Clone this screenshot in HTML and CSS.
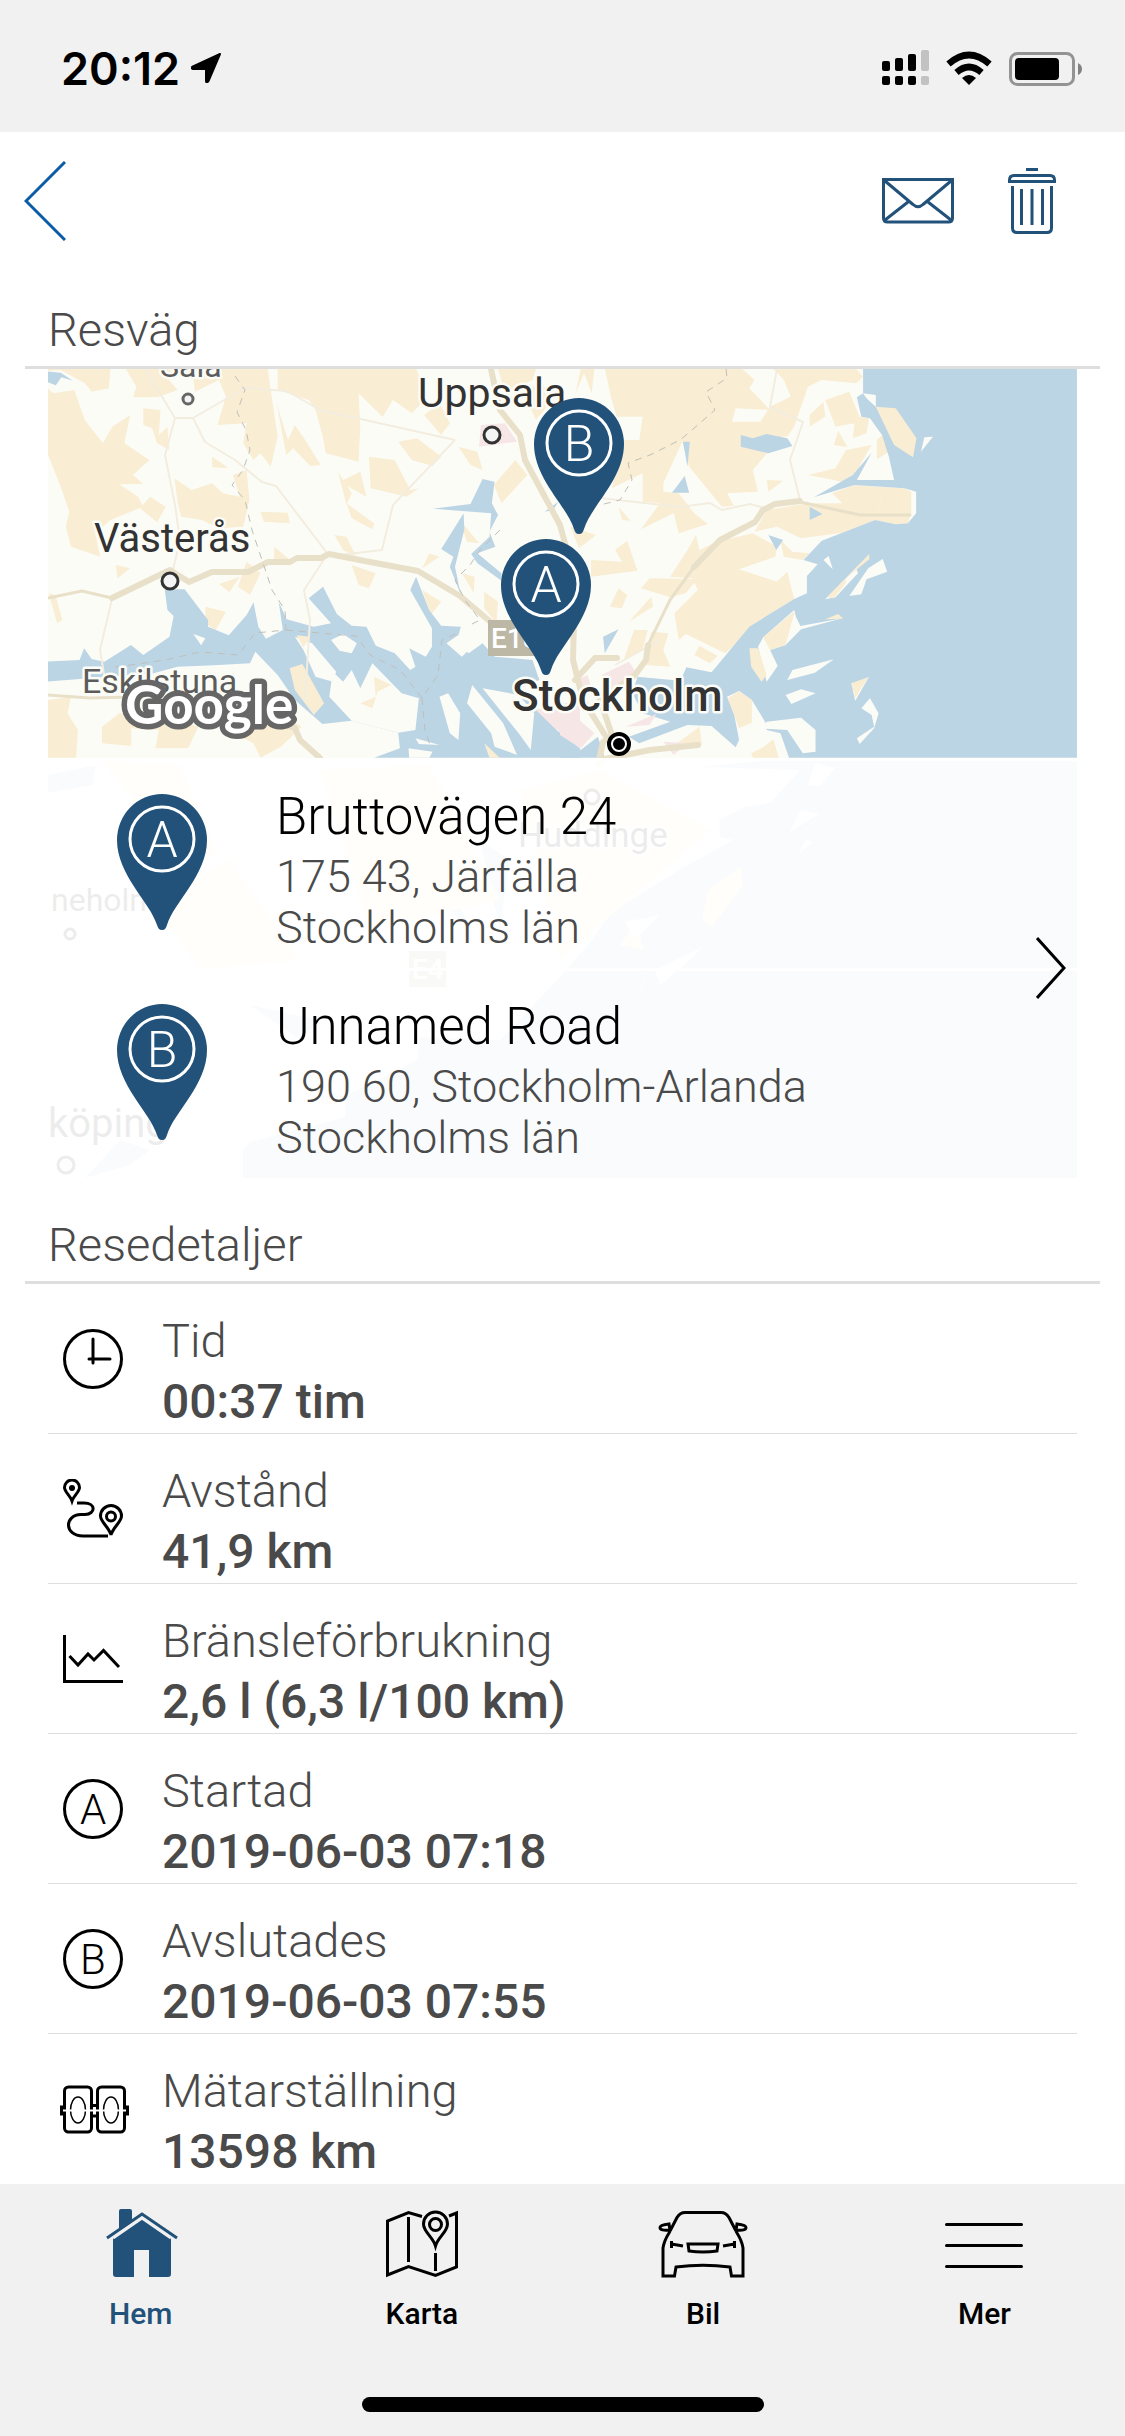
FILE: index.html
```html
<!DOCTYPE html>
<html lang="sv">
<head>
  <meta charset="UTF-8">
  <meta name="viewport" content="width=device-width, initial-scale=1">
  <title>Resedetaljer</title>
  <link rel="stylesheet" href="styles.css">
</head>
<body>
  <!-- shared pin shape -->
  <svg class="defs" width="0" height="0" aria-hidden="true">
    <defs>
      <g id="pin">
        <path d="M45 136c-3 0-4-2-5-5C33 108 0 81 0 46A45 46 0 0 1 90 46C90 81 57 108 50 131c-1 3-2 5-5 5z" fill="#22527a"/>
        <circle cx="45" cy="45" r="32" fill="none" stroke="#fff" stroke-width="3"/>
      </g>
    </defs>
  </svg>

  <div class="status">
    <div class="status-time">
      <span>20:12</span>
      <svg width="30" height="30" viewBox="0 0 30 30"><path d="M29 1 17.500 28Q15.500 31 15 28V16H2Q-1 15 2 13.500z" stroke="#000" stroke-width="2" stroke-linejoin="round"/></svg>
    </div>
    <svg width="200" height="36" viewBox="882 50 200 36">
      <rect x="882" y="61" width="8" height="10" rx="2"/>
      <rect x="895" y="58" width="8" height="13" rx="2"/>
      <rect x="908" y="54" width="8" height="17" rx="2"/>
      <rect x="921" y="50" width="8" height="21" rx="2" fill="#c2c2c2"/>
      <rect x="882" y="76" width="8" height="9" rx="2"/>
      <rect x="895" y="76" width="8" height="9" rx="2"/>
      <rect x="908" y="76" width="8" height="9" rx="2"/>
      <rect x="921" y="76" width="8" height="9" rx="2" fill="#c2c2c2"/>
      <path d="M948.500 64Q969 46 989.500 64M956.500 72.500Q969 61.500 981.500 72.500" fill="none" stroke="#000" stroke-width="6.500"/>
      <path d="M962 78Q969 72 976 78L969 85z"/>
      <rect x="1010.500" y="53.500" width="63" height="31" rx="7" fill="none" stroke="#939393" stroke-width="3"/>
      <rect x="1015" y="58" width="44" height="22" rx="4"/>
      <path d="M1078 63q4 2 4 6t-4 6z" fill="#828282"/>
    </svg>
  </div>

  <header class="header">
    <button class="icon-btn" aria-label="Tillbaka">
      <svg width="42" height="80" viewBox="0 0 42 80"><path d="M41 1 2 40 41 79" fill="none" stroke="#0a5ca8" stroke-width="3"/></svg>
    </button>
    <div class="header-actions">
      <button class="icon-btn" aria-label="Skicka">
        <svg width="72" height="46" viewBox="0 0 72 46" fill="none" stroke="#22527a" stroke-width="3"><path d="M1.500 1.500H70.500V40Q70.500 44 66.500 44H5.500Q1.500 44 1.500 40zM3 3 31 26.500Q36 31 41 26.500L69 3M3 42 26 24M69 42 46 24"/></svg>
      </button>
      <button class="icon-btn" aria-label="Ta bort">
        <svg width="48" height="66" viewBox="0 0 48 66" fill="none" stroke="#22527a" stroke-width="3"><path d="M18 1.500H30M1.500 15V12Q1.500 7.500 6 7.500H42Q46.500 7.500 46.500 12V13.500H1.500M4.500 18V60Q4.500 64.500 9 64.500H39Q43.500 64.500 43.500 60V18M13.500 21V57M24 21V57M34.500 21V57"/></svg>
      </button>
    </div>
  </header>

  <main>
    <h2 class="section-title">Resväg</h2>
    <section class="map">
      <svg class="map-bg" viewBox="48 369 1029 809" preserveAspectRatio="xMidYMin slice">
        <rect x="48" y="369" width="1029" height="809" fill="#fcfcf7"/>

        <!-- west: fields, water, islands -->
        <g transform="translate(40 360) scale(.3444 .3333)">
          <g fill="#f9edd3">
            <path d="M22 85 40 100 100 90 130 180 183 250 175 285 182 250 210 200 262 165 245 250 318 300 270 345 300 372 230 373 285 410 300 440 205 480 160 520 175 590 90 560 75 500 85 455 60 380 22 280z"/>
            <path d="M22 20H205L200 85 150 95 130 70 60 30 22 32zM245 20H390L375 60 400 90 340 112 270 112 280 80z"/>
            <path d="M300 145 350 150 345 225 370 200 375 270 340 250 325 205 300 195zM440 20H660L690 230 670 320 640 280 620 300 590 250 600 190 515 195 540 110 520 60 450 95z"/>
            <path d="M690 20H1090L1125 110 1080 160 1025 120 995 170 925 100 930 200 925 305 830 280 820 225 800 150 780 120 690 90zM687 130 720 240 740 195 770 240 815 315 785 318 735 265 715 285z"/>
            <path d="M390 355 440 390 500 370 530 400 580 410 560 345 600 330 608 420 590 500 520 505 470 480 410 470 400 430zM500 290 548 325 500 322zM320 410 365 440 340 487 290 445z"/>
            <path d="M865 335 905 400 890 435zM870 365 930 335 948 410zM955 290 1030 300 1075 390 1100 385 1065 410 960 385zM1040 245 1095 235 1165 290 1140 318 1080 300zM1215 260 1270 275 1285 330 1250 315zM1380 300 1415 345 1340 430 1318 375zM1115 165 1160 130 1190 190 1165 225zM890 430 970 490 965 508 905 475zM640 455 720 458 725 490 650 485zM855 525 890 530 918 590 880 570zM1215 475 1275 550 1240 545zM905 615 975 640 955 685 925 675zM1130 580 1160 590 1110 625zM1110 690 1165 725 1135 765zM680 560 738 610 680 600zM520 672 580 650 550 697zM600 605 640 640 610 705 575 680zM220 615 262 625 225 655zM25 700 45 705 65 780 50 790zM480 740 540 755 510 810 480 790zM1225 640 1262 650 1260 700zM1290 695 1330 725 1325 790 1290 745z"/>
            <path d="M1330 27H1440L1430 60 1350 100zM1400 90 1460 70 1480 130 1440 180zM22 1020 90 1010 80 1060 110 1110 105 1193H22zM180 1100 230 1060 350 1060 460 1100 430 1165 335 1165 345 1110 265 1105 265 1158 180 1150zM555 1080 700 1060 760 1100 700 1160 640 1193 620 1150 560 1120z"/>
          </g>
          <g fill="#bcd5e5">
            <path d="M22 34 60 38 96 62 62 52 46 76 22 66z"/>
            <path d="M22 905 115 900 128 865 150 897 187 905 264 855 300 885 376 830 388 768 370 750 362 688 420 688 488 780 488 800 548 826 600 765 620 727 634 800 656 836 705 810 693 725 716 778 795 800 845 790 780 715 822 680 862 762 905 797 948 800 975 857 1030 880 1075 930 1090 920 1072 865 1120 890 1138 860 1138 805 1075 690 1092 650 1130 750 1165 797 1222 800 1210 845 1245 880 1285 850 1320 890 1430 900 1450 960 1380 990 1440 1040 1500 1110 1568 1165V1193H970L1045 1165 1040 1118 905 1082 820 1092 740 1020 690 945 625 875 610 910 520 915 400 920 330 940 22 965z"/>
            <path d="M1140 446 1250 432 1285 357 1320 365 1312 430 1330 465 1305 515 1322 560 1270 580 1340 640V662L1270 610 1252 582 1305 530 1310 460zM1230 460 1165 567 1200 590 1190 620 1222 705 1205 620 1232 510zM1465 455 1505 425 1490 450z"/>
          </g>
          <g fill="#fcfcf7">
            <path d="M445 822 480 835 468 856zM845 840 880 822 920 850 905 880 870 872zM740 830 790 850 860 935 850 965 800 950 765 870z"/>
            <path d="M850 935 880 965 905 930 930 985 965 910 1050 1000 1100 1015 1090 1110 1040 1118 905 1082 840 1010zM1160 1010 1185 1000 1220 1060 1215 1140 1190 1120zM1255 975 1345 1090 1385 1185 1320 1160 1310 1120 1240 1030zM1285 985 1390 1005 1435 1060 1425 1170 1390 1120zM1180 850 1215 825 1245 870 1225 890zM1070 1165 1140 1175 1130 1193H1072zM1090 1135 1160 1155 1100 1152z"/>
          </g>
          <path d="M725 925 762 912 825 1030 795 1065 740 990zM745 826 785 830 765 862zM970 950 1020 975 980 995 965 1045 930 1030 975 1010zM1290 1150 1335 1193H1305z" fill="#f9edd3"/>
          <path d="M1280 195 1350 190 1385 245 1275 260zM1440 1050 1568 1020V1160L1490 1100z" fill="#f6e6e6"/>
        </g>

        <!-- east: coast and archipelago -->
        <g transform="translate(560 360) scale(.3444 .3333)">
          <g fill="#f9edd3">
            <path d="M60 27 100 27 92 100 70 40 45 100zM135 40 160 27H330L340 70 395 128 300 178 240 150 150 120zM345 27H530L565 60 550 85 610 150 510 145 500 185 580 185 660 240 605 275 560 330 575 395 485 400 505 437 470 440 375 320 355 245 300 370 300 395 345 400 390 460 430 492 345 520 330 460 235 508 290 430 240 425 240 340 150 385 185 240H230L240 170 165 170 150 120 130 27z"/>
            <path d="M620 27H860L880 50 860 70 760 60 720 80 680 200 660 230 560 220 610 140 670 110 650 60zM725 165 765 125 770 170 725 200zM770 120 840 95 870 170 898 175 890 220 850 235 855 190 800 200zM795 255 808 212 835 262zM720 345 800 325 830 270 905 255 860 335 820 365zM920 240 935 225 955 275 920 298z"/>
            <path d="M917 140 975 145 1035 235 1025 292 970 255zM855 375 925 380 932 420 915 480 820 518 700 535 630 500 565 515 600 450 720 430 820 430 790 400zM600 360 648 362 605 395z"/>
            <path d="M925 380 1000 385 1020 395V460L1010 490 975 493 915 480 932 420z"/>
            <path d="M455 545 560 520 630 560 625 590 520 628 630 665 660 635 680 717 620 755 575 790 480 880 365 822 345 840 332 760 400 690 385 655 320 650 370 570 395 525 405 570zM640 540 675 575 725 580 705 600 650 590zM170 440 205 482 180 480zM160 570 195 542 225 632 90 650 90 600 180 605zM235 685 260 655 400 657 365 700 320 712zM145 740 170 685 195 705 180 745zM200 785 265 710 270 740zM215 810H255L240 870 185 900zM265 815 315 820 300 870 320 920 250 915zM405 857 458 888 435 910 390 885zM30 500 105 525 55 565z"/>
          </g>
          <g fill="#bcd5e5">
            <path d="M880 20H1501V1193H665L640 1120 600 1110 595 1085 557 1020 520 993 485 1010 505 1060 520 1140 510 1162 440 1098 370 1095 280 1130 230 1150 200 1130 320 1085 240 1060 210 1000 225 950 350 962 367 922 440 937 550 800 680 717 717 700V648L748 613 707 600 760 542 820 518 915 480 975 493 1010 490 1034 460V395L1000 385 855 375 737 412 850 345 905 278 862 360H970L955 290 935 225 900 175 875 170 862 112 880 100z"/>
            <path d="M525 225 560 235 600 222 660 235 675 258 605 280 525 260zM357 245H377L370 320zM325 398 362 348 375 398zM605 525 648 540 628 570zM725 440 762 462 725 480zM125 830 170 808 130 880zM0 1120 60 1170 110 1130 130 1193H0z"/>
          </g>
          <g fill="#fcfcf7">
            <path d="M880 100 917 105V140L890 115zM1058 232 1083 230 1048 275zM840 708 895 625 937 597 950 635 890 658 875 703zM860 625 865 640 800 712 770 718zM765 600 780 588 792 628zM590 832 680 750 685 770 698 798 820 775 700 808 655 855 610 870 632 918 600 965 575 860zM660 960 675 930 795 898 740 938zM655 1005 700 988 742 1000 672 1032zM897 950 870 1000 857 1022 850 990zM875 1045 900 1015 925 1060 912 1105 870 1152 862 1135 912 1100 905 1065zM580 1105 600 1085 700 1073 742 1110V1175L705 1180 660 1110z"/>
          </g>
          <path d="M917 140 975 145 1035 235 1025 292 970 255zM845 970 895 952 857 1015zM898 582V598L830 655V670L795 715 775 712zM590 832 682 752 655 855 610 870zM550 865H575L600 945 585 965 555 920zM770 778 808 762 822 776zM487 1015 520 993 557 1020V1088L520 1105 500 1050zM340 1150 405 1100 412 1155zM555 1180 585 1165 620 1138 635 1193H560z" fill="#f9edd3"/>
          <path d="M50 960 80 945 90 980 60 1010zM120 945 200 905 220 935 140 990zM0 1030 100 1120 60 1165 0 1125zM190 1100 280 1062 260 1095zM300 1145 370 1150 330 1185z" fill="#f6e6e6"/>
        </g>

        <!-- south, below the route list -->
        <path d="M788 758 700 767 745 807 719 820 720 837 733 840 679 870 610 913 592 940 560 977 500 1040 420 1037 417 1060 347 1095 345 1117 250 1142 243 1150V1178H1077V758z" fill="#bcd5e5"/>
        <path d="M48 775 96 765 92 785 48 793zM250 1005 320 1020 300 1040zM85 1178 120 1140 150 1150 130 1165zM420 850 450 880 470 930 430 890zM480 840 510 860 500 930z" fill="#bcd5e5"/>
        <path d="M100 760 180 765 220 860 160 830zM150 900 230 860 300 960 200 970zM320 770 430 765 500 900 370 930zM520 790 600 770 710 830 640 890 560 960zM702 920 708 890 741 867 743 885 712 927zM620 945 637 920 643 950z" fill="#f9edd3"/>
        <path d="M700 767 800 770 770 803 745 807zM808 785 815 763 835 768 820 786zM790 832 800 810 819 814zM798 854 806 840 813 842zM655 970 703 947 690 960 660 985zM625 922 660 915 635 940zM637 1000 648 970 642 985z" fill="#fcfcf7"/>

        <!-- roads -->
        <g fill="none" stroke="#f3ede0" stroke-width="2" stroke-linejoin="round">
          <path d="M145 369 175 418 165 455 175 505 180 540 173 570M175 418H193L245 388 287 391 320 410 455 440M193 418 205 442 235 460 262 482 276 486 327 553M455 440 410 487 393 505 382 550 330 556M112 599 100 650 105 680M327 555 304 590 310 620 305 700M777 369 770 407 803 422 790 460 800 500M600 498 680 507 710 503 722 510 750 504 765 508M660 640 615 665"/>
        </g>
        <g fill="none" stroke="#e9e0c9" stroke-linejoin="round" stroke-linecap="round">
          <path d="M48 598 82 591 112 598M800 502 860 515H910M694 567 670 600 648 645M48 695 90 698 130 697" stroke-width="3"/>
          <path d="M112 598 170 570 189 582 212 572H248L268 562H290L297 558H321L329 554 370 562 418 571 460 596 500 630 540 655M491 369 500 410 520 435 525 460 560 525 575 580 573 660 583 700 605 735M800 501 775 504 763 510 755 522 720 540 694 567M648 645 646 660 635 675 600 700 612 735 603 742 598 765M575 680 595 658 617 658M600 760 650 750 698 745M270 720 295 728 300 740 320 758" stroke-width="6"/>
        </g>
        <path d="M235 376 245 390 237 412 246 430 250 450 243 470 232 485 245 500 252 530 262 560 272 590 285 610 286 630 255 633 238 655 200 652 165 660 110 668M286 630 330 634 356 636 370 655 400 670 422 698 438 675 442 640 460 632M422 698 425 730 430 745M726 369 727 378 706 392 715 410 692 430 680 440 650 455 628 463 632 480 620 500 600 505M500 530 480 550 470 565 455 580 465 600 480 620 470 625" fill="none" stroke="#bfbfba" stroke-width="1" stroke-dasharray="7 6"/>

        <!-- places -->
        <g class="place">
          <text class="minor" x="160" y="377" font-size="32">Sala</text>
          <text x="418" y="407" font-size="41">Uppsala</text>
          <text x="94" y="552" font-size="40">Västerås</text>
          <text class="minor" x="82" y="693" font-size="34">Eskilstuna</text>
          <text x="518" y="847" font-size="35">Huddinge</text>
          <text x="51" y="911" font-size="32">neholm</text>
          <text x="48" y="1137" font-size="40">köping</text>
        </g>
        <g fill="#f4f4f4" stroke="#333" stroke-width="3">
          <circle cx="188" cy="399" r="5" stroke="#666"/>
          <circle cx="492" cy="435" r="8"/>
          <circle cx="170" cy="581" r="8"/>
          <circle cx="592" cy="797" r="7"/>
          <circle cx="70" cy="934" r="5"/>
          <circle cx="66" cy="1165" r="8"/>
        </g>
        <rect x="488" y="620" width="62" height="36" fill="#bdb7a6"/>
        <text class="badge" x="491" y="648">E18</text>
        <rect x="409" y="951" width="37" height="36" fill="#bdb7a6"/>
        <text class="badge" x="412" y="979">E4</text>

        <use href="#pin" x="534" y="398"/>
        <text class="pin-letter" x="579" y="461">B</text>
        <use href="#pin" x="501" y="539"/>
        <text class="pin-letter" x="546" y="602">A</text>

        <g class="place"><text class="capital" x="512" y="711" font-size="44">Stockholm</text></g>
        <circle cx="619" cy="744" r="8" fill="#000" stroke="#fff" stroke-width="4"/>
        <circle cx="619" cy="744" r="10" fill="none" stroke="#000" stroke-width="4"/>
        <text class="google" x="125" y="724">Google</text>
      </svg>

      <ul class="route">
        <li class="stop">
          <svg width="90" height="136" viewBox="0 0 90 136"><use href="#pin"/><text class="pin-letter" x="45" y="63">A</text></svg>
          <div>
            <h3>Bruttovägen 24</h3>
            <p>175 43, Järfälla</p>
            <p>Stockholms län</p>
          </div>
        </li>
        <li class="stop">
          <svg width="90" height="136" viewBox="0 0 90 136"><use href="#pin"/><text class="pin-letter" x="45" y="63">B</text></svg>
          <div>
            <h3>Unnamed Road</h3>
            <p>190 60, Stockholm-Arlanda</p>
            <p>Stockholms län</p>
          </div>
        </li>
      </ul>
      <button class="icon-btn route-open" aria-label="Visa resväg">
        <svg width="30" height="62" viewBox="0 0 30 62"><path d="M1 1 28 31 1 61" fill="none" stroke="#000" stroke-width="3"/></svg>
      </button>
    </section>

    <h2 class="section-title">Resedetaljer</h2>
    <ul class="details">
      <li>
        <svg width="72" height="60" viewBox="-3 0 72 60"><circle cx="30" cy="30" r="28.500"/><path d="M30 10V34M26 30H47" stroke-linecap="round"/></svg>
        <div><p>Tid</p><strong>00:37 tim</strong></div>
      </li>
      <li>
        <svg width="72" height="60" viewBox="-3 0 72 60"><path d="M9 22C7 16 1.500 13 1.500 8.500a7.500 7.500 0 0 1 15 0C16.500 13 11 16 9 22zM14 24H21C33 24 33 35 22 35.500H18C1 36 1 57 20 57H45M48 56C46 48 37.500 43 37.500 37a10.500 10.500 0 0 1 21 0C58.500 43 50 48 48 56z"/><circle cx="9" cy="9" r="3" fill="#000" stroke="none"/><circle cx="48" cy="37.500" r="4.500"/></svg>
        <div><p>Avstånd</p><strong>41,9 km</strong></div>
      </li>
      <li>
        <svg width="72" height="60" viewBox="-3 0 72 60"><path d="M1.500 6V52.500H60M6.500 27 15 36 25 25 31 31 40.500 21.500 56 38"/></svg>
        <div><p>Bränsleförbrukning</p><strong>2,6 l (6,3 l/100 km)</strong></div>
      </li>
      <li>
        <svg width="72" height="60" viewBox="-3 0 72 60"><circle cx="30" cy="30" r="28.500"/><text class="ring-letter" x="30" y="45">A</text></svg>
        <div><p>Startad</p><strong>2019-06-03 07:18</strong></div>
      </li>
      <li>
        <svg width="72" height="60" viewBox="-3 0 72 60"><circle cx="30" cy="30" r="28.500"/><text class="ring-letter" x="30" y="45">B</text></svg>
        <div><p>Avslutades</p><strong>2019-06-03 07:55</strong></div>
      </li>
      <li>
        <svg width="72" height="60" viewBox="-3 0 72 60"><rect x="1.500" y="8" width="27" height="45" rx="4"/><rect x="34.500" y="8" width="27" height="45" rx="4"/><path d="M1 28H-1.500V35H1M62 28H64.500V35H62M29 26.500H34M29 37H34"/><g stroke-width="1.500"><ellipse cx="15" cy="31" rx="7.500" ry="13"/><ellipse cx="48" cy="31" rx="7.500" ry="13"/></g><path d="M0 31.500H63" stroke="#fff" stroke-width="2"/></svg>
        <div><p>Mätarställning</p><strong>13598 km</strong></div>
      </li>
    </ul>
  </main>

  <footer class="tabbar">
    <nav class="tabs">
      <a class="tab active" href="#">
        <svg width="90" height="72" viewBox="0 0 90 72"><path d="M23 25V5Q23 3 25 3H34Q36 3 36 5V16zM17 32 46 13 75 32V68Q75 71 72 71H53V44H38V71H20Q17 71 17 68z" fill="#22527a"/><path d="M17 32 46 12 75 32" fill="none" stroke="#f1f1f1" stroke-width="3"/><path d="M11 32 46 8 81 32" fill="none" stroke="#22527a" stroke-width="3"/></svg>
        Hem
      </a>
      <a class="tab" href="#">
        <svg width="90" height="72" viewBox="0 0 90 72" fill="none" stroke="#000" stroke-width="3"><path d="M45 10.500 31.500 6.500 10.500 15V69L31.500 60.500 58.500 69.500 79.500 61V7L72 10M31.500 11V56M58.500 47V65M58.500 40C56 31 46.500 26 46.500 18a12 12 0 0 1 24 0C70.500 26 61 31 58.500 40z"/><circle cx="58.500" cy="18.500" r="6"/></svg>
        Karta
      </a>
      <a class="tab" href="#">
        <svg width="90" height="72" viewBox="0 0 90 72" fill="none" stroke="#000" stroke-width="3"><path d="M27 6.500H63Q68 6.500 71 11.500L79 27Q84 35 85 42V70H73.500L72 61Q45 57.500 18 61L16.500 70H5V42Q6 35 11 27L19 11.500Q22 6.500 27 6.500zM12 24Q2 25 2 21.500 2 19 11 18zM78 24Q88 25 88 21.500 88 19 79 18zM30 38H60L59 45Q45 47 31 45zM13.500 35V42M13.500 38 25 40M76.500 35V42M76.500 38 65 40"/></svg>
        Bil
      </a>
      <a class="tab" href="#">
        <svg width="90" height="72" viewBox="0 0 90 72" stroke="#000" stroke-width="3" stroke-linecap="round"><path d="M7.500 18.500H82.500M7.500 39.500H82.500M7.500 60.500H82.500"/></svg>
        Mer
      </a>
    </nav>
    <div class="home-indicator"></div>
  </footer>
</body>
</html>
```
FILE: styles.css
```css
* {
  box-sizing: border-box;
  margin: 0;
  padding: 0;
}

body {
  min-height: 100vh;
  display: flex;
  flex-direction: column;
  background: #fff;
  color: #4a4a4a;
  font-family: Roboto, "Liberation Sans", sans-serif;
  font-weight: 300;
}

svg {
  display: block;
  flex-shrink: 0;
}

.defs {
  position: absolute;
}

ul {
  list-style: none;
}

.icon-btn {
  border: none;
  background: none;
  cursor: pointer;
}

/* status bar */
.status {
  height: 132px;
  padding: 4px 43px 0 61px;
  display: flex;
  align-items: center;
  justify-content: space-between;
  background: #f1f1f1;
  color: #000;
}

.status-time {
  display: flex;
  align-items: center;
  gap: 11px;
  font-family: Inter, Roboto, sans-serif;
  font-size: 45px;
  font-weight: 600;
}

/* header */
.header {
  height: 131px;
  padding: 7px 69px 0 24px;
  display: flex;
  align-items: center;
  justify-content: space-between;
}

.header-actions {
  display: flex;
  align-items: center;
  gap: 54px;
}

.section-title {
  margin: 0 25px;
  padding: 37px 23px 6px;
  border-bottom: 3px solid #dedede;
  font-size: 47px;
  font-weight: 300;
  line-height: 60px;
}

/* map with the route on top */
.map {
  position: relative;
  margin: 0 48px;
  padding-top: 389px;
  overflow: hidden;
}

.map-bg {
  position: absolute;
  inset: 0;
  width: 100%;
  height: 100%;
}

.place text {
  font-weight: 400;
  fill: #333;
  stroke: #fcfcf7;
  stroke-width: 5px;
  stroke-linejoin: round;
  paint-order: stroke;
}

.place .minor {
  fill: #5c5c5c;
}

.place .capital {
  font-weight: 500;
}

.badge {
  font-size: 28px;
  font-weight: 500;
  fill: #fff;
}

.google {
  font-family: Lato, sans-serif;
  font-size: 53px;
  font-weight: 700;
  fill: #fff;
  stroke: #666;
  stroke-width: 11px;
  stroke-linejoin: round;
  paint-order: stroke;
}

.pin-letter,
.ring-letter {
  font-weight: 300;
  text-anchor: middle;
}

.pin-letter {
  font-size: 50px;
  fill: #fff;
}

.ring-letter {
  font-size: 42px;
  fill: #000;
  stroke: none;
}

.route {
  position: relative;
}

.stop {
  height: 210px;
  padding: 26px 69px 0;
  display: flex;
  gap: 69px;
  border-top: 3px solid #fff;
  background: rgba(255, 255, 255, 0.91);
}

.stop svg {
  margin-top: 7px;
}

.stop h3 {
  margin-bottom: 4px;
  color: #000;
  font-size: 51px;
  font-weight: 300;
  line-height: 60px;
}

.stop p {
  font-size: 45px;
  line-height: 51px;
}

.route-open {
  position: absolute;
  right: 11px;
  bottom: 179px;
}

/* details */
.details {
  margin: 0 48px;
}

.details li {
  padding: 26px 12px 1px;
  display: flex;
  gap: 30px;
  border-bottom: 1px solid #dedede;
  font-size: 47px;
  line-height: 61px;
}

.details li:last-child {
  border-bottom: none;
}

.details svg {
  margin-top: 19px;
  fill: none;
  stroke: #000;
  stroke-width: 3px;
}

.details strong {
  display: block;
  font-size: 48px;
  font-weight: 500;
}

/* tab bar */
.tabbar {
  margin-top: auto;
  padding: 22px 0 24px;
  background: #f1f1f1;
}

.tabs {
  display: flex;
}

.tab {
  flex: 1;
  display: flex;
  flex-direction: column;
  align-items: center;
  gap: 18px;
  color: #000;
  font-size: 30px;
  font-weight: 500;
  line-height: 36px;
  text-decoration: none;
}

.tab.active {
  color: #22527a;
}

.home-indicator {
  width: 402px;
  height: 15px;
  margin: 65px auto 0;
  border-radius: 8px;
  background: #000;
}
```
